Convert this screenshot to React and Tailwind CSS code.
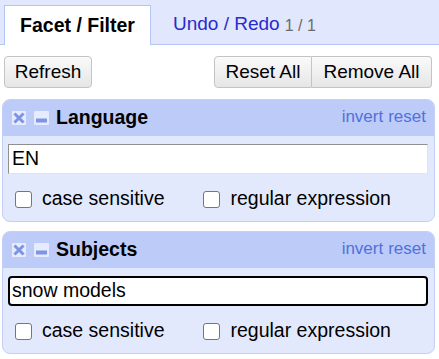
import React from "react";

const CloseIcon = () => (
  <svg width="14" height="14" viewBox="0 0 14 14" className="shrink-0">
    <rect x="0" y="0" width="14" height="14" rx="1" fill="#e6ebfd" />
    <path d="M3.5 3.5 L10.5 10.5 M10.5 3.5 L3.5 10.5" stroke="#7d95e4" strokeWidth="3" strokeLinecap="square" />
  </svg>
);

const MinIcon = () => (
  <svg width="15" height="14" viewBox="0 0 15 14" className="shrink-0">
    <rect x="0" y="0" width="15" height="14" rx="1" fill="#e6ebfd" />
    <rect x="2" y="7.5" width="11" height="4" fill="#7d95e4" />
  </svg>
);

const Checkbox = () => (
  <span className="inline-block w-[17px] h-[17px] rounded-[3px] border border-[#767676] bg-white shrink-0" />
);

const Facet = ({ title, value, focused }) => (
  <div className="mx-[2px] rounded-[8px] border border-[#c3cff5] bg-[#e3e9fd] overflow-hidden">
    {/* header */}
    <div className="h-[36px] bg-[#bdcbf9] flex items-center pl-[9px] pr-[8px]">
      <CloseIcon />
      <span className="w-[8px]" />
      <MinIcon />
      <span className="ml-[7px] font-bold text-[19.5px] text-black">{title}</span>
      <div className="ml-auto text-[17px] text-[#4f72dc] flex gap-[5px] -mt-[3px]">
        <span>invert</span>
        <span>reset</span>
      </div>
    </div>
    {/* input */}
    <div className="px-[5px] pt-[8px]">
      {focused ? (
        <div className="h-[30px] w-[420px] border-2 border-black rounded-[4px] bg-white flex items-center px-[2px] text-[19.5px]">
          {value}
        </div>
      ) : (
        <div className="h-[30px] w-[420px] border border-t-[#8f8f8f] border-l-[#8f8f8f] border-r-[#e4e4e4] border-b-[#e4e4e4] bg-white flex items-center px-[3px] text-[19.5px]">
          {value}
        </div>
      )}
    </div>
    {/* options */}
    <div className="flex items-center h-[47px] pt-[3px] text-[19.5px]">
      <label className="flex items-center ml-[12px]">
        <Checkbox />
        <span className="ml-[10px]">case sensitive</span>
      </label>
      <label className="flex items-center ml-[39px]">
        <Checkbox />
        <span className="ml-[10px]">regular expression</span>
      </label>
    </div>
  </div>
);

export default function App() {
  return (
    <div
      className="w-[439px] h-[359px] bg-white text-black overflow-hidden"
      style={{ fontFamily: '"Liberation Sans", Arial, sans-serif' }}
    >
      {/* tabs */}
      <div className="h-[45px] bg-[#e1e7fc] border-b border-[#b4c4f4] flex items-end pl-[4px]">
        <div className="h-[40px] w-[147px] bg-white border border-b-0 border-[#b4c4f4] -mb-px flex items-center justify-center font-bold text-[19.5px]">
          Facet / Filter
        </div>
        <div className="h-[40px] flex items-center ml-[22px] text-[19px] text-[#2a2ad0]">
          Undo / Redo
          <span className="ml-[5px] text-[16px] text-[#6b6b6b] mt-[3px]">1 / 1</span>
        </div>
      </div>

      {/* buttons */}
      <div className="flex items-center px-[4px] pt-[11px] pb-[11px]">
        <button className="h-[32px] w-[88px] rounded-[4px] border border-[#c4c4c4] bg-gradient-to-b from-[#fafafa] to-[#e6e6e6] text-[19px]">
          Refresh
        </button>
        <div className="ml-auto mr-[3px] flex">
          <button className="h-[32px] w-[98px] rounded-l-[4px] border border-[#c4c4c4] bg-gradient-to-b from-[#fafafa] to-[#e6e6e6] text-[19px]">
            Reset All
          </button>
          <button className="h-[32px] w-[120px] rounded-r-[4px] border border-l-0 border-[#c4c4c4] bg-gradient-to-b from-[#fafafa] to-[#e6e6e6] text-[19px]">
            Remove All
          </button>
        </div>
      </div>

      <div className="flex flex-col gap-[9px] w-[437px]">
        <Facet title="Language" value="EN" />
        <Facet title="Subjects" value="snow models" focused />
      </div>
    </div>
  );
}
